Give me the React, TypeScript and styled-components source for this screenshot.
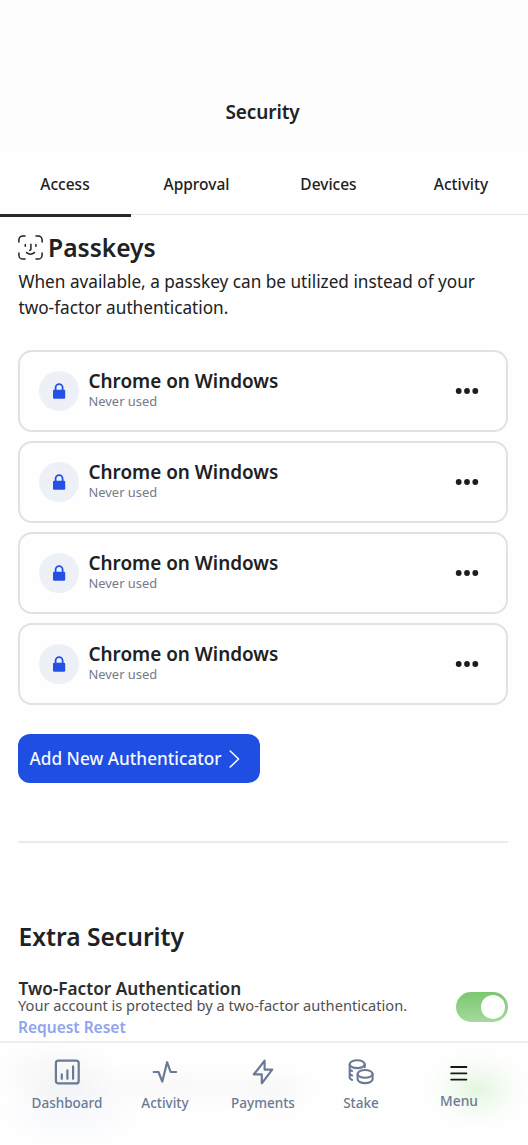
import React from "react";
import styled, { createGlobalStyle } from "styled-components";

const Global = createGlobalStyle`
  *, *::before, *::after { box-sizing: border-box; }
  body { margin: 0; background: #fff; }
  button { font: inherit; letter-spacing: inherit; border: 0; padding: 0; background: none; cursor: pointer; color: inherit; }
  h1, h2, h3, p { margin: 0; }
  svg { display: block; flex: none; }
`;

const Screen = styled.div`
  width: 100%;
  height: 1145px;
  overflow: hidden;
  display: flex;
  flex-direction: column;
  background: #fefefe;
  color: #202122;
  font-family: "Noto Sans", sans-serif;
`;

const Header = styled.header`
  height: 151px;
  flex: none;
  padding: 98px 3px 0 0;
  background: #fdfdfd;
  text-align: center;
`;

const Title = styled.h1`
  font-size: 19px;
  line-height: 28px;
  font-weight: 600;
  letter-spacing: -0.1px;
`;

const Tabs = styled.nav`
  height: 66px;
  flex: none;
  display: grid;
  grid-template-columns: 131px 132px 132px 133px;
  background: linear-gradient(#e6e6e6, #e6e6e6) 0 63px / 100% 1px no-repeat;
`;

const Tab = styled.button<{ $active?: boolean }>`
  height: 66px;
  padding: 2px 1px 0 0;
  border-bottom: 3px solid ${(p) => (p.$active ? "#29292b" : "transparent")};
  font-size: 15.5px;
  font-weight: 500;
`;

const Content = styled.main`
  flex: 1;
  min-height: 0;
  overflow: hidden;
  padding: 13px 20px 0 18px;
`;

const SectionTitle = styled.h2`
  display: flex;
  align-items: center;
  gap: 5px;
  height: 35px;
  font-size: 24.6px;
  font-weight: 600;
`;

const Intro = styled.p`
  margin-top: 4px;
  padding-left: 0.5px;
  font-size: 17.2px;
  line-height: 26px;
  white-space: nowrap;
`;

const KeyList = styled.div`
  margin-top: 29px;
  display: flex;
  flex-direction: column;
  gap: 9px;
`;

const KeyCard = styled.div`
  height: 82px;
  display: flex;
  align-items: center;
  padding: 0 27px 0 19px;
  border: 2px solid #e1e2e2;
  border-radius: 14px;
`;

const KeyBadge = styled.span`
  width: 40px;
  height: 40px;
  display: grid;
  place-items: center;
  border-radius: 50%;
  background: #edf1f7;
`;

const KeyText = styled.div`
  flex: 1;
  margin-left: 9.5px;
  padding-bottom: 3px;
`;

const KeyName = styled.h3`
  font-size: 18.9px;
  line-height: 24px;
  font-weight: 600;
`;

const KeyMeta = styled.p`
  font-size: 12.9px;
  line-height: 17px;
  color: #747b86;
`;

const AddButton = styled.button`
  margin-top: 29px;
  width: 242px;
  height: 49px;
  display: flex;
  align-items: center;
  gap: 7px;
  padding-left: 11.5px;
  border-radius: 12px;
  background: #1f4ee3;
  color: #f4f7ff;
  font-size: 17.2px;
  font-weight: 500;
  white-space: nowrap;
`;

const Divider = styled.hr`
  height: 2px;
  margin: 58px 0 0;
  border: 0;
  background: #ebebeb;
`;

const ExtraTitle = styled.h2`
  margin-top: 77px;
  padding-left: 0.5px;
  font-size: 24.6px;
  line-height: 34px;
  font-weight: 600;
`;

const Setting = styled.div`
  margin-top: 24px;
  display: flex;
  justify-content: space-between;
`;

const SettingName = styled.h3`
  padding: 1px 0 0 0.5px;
  font-size: 17.2px;
  line-height: 20px;
  font-weight: 600;
  color: #2c2c2d;
`;

const SettingMeta = styled.p`
  margin-top: -2px;
  font-size: 14.63px;
  line-height: 16px;
  color: #505152;
  white-space: nowrap;
`;

const ResetLink = styled.button`
  display: block;
  margin-top: 3px;
  font-size: 15.5px;
  line-height: 22px;
  font-weight: 600;
  color: #8fa4ee;
`;

const Toggle = styled.button`
  width: 52px;
  height: 30px;
  margin-top: 14px;
  padding: 3px;
  display: flex;
  justify-content: flex-end;
  border-radius: 15px;
  background: linear-gradient(#7bc770, #a4da9c);
`;

const Knob = styled.span`
  width: 24px;
  height: 24px;
  border-radius: 50%;
  background: #fff;
`;

const BottomNav = styled.nav`
  height: 104px;
  flex: none;
  display: grid;
  grid-template-columns: repeat(5, 98px);
  padding-left: 18px;
  border-top: 2px solid #eeeeee;
  background:
    radial-gradient(ellipse 52px 40px at 477px 46px, rgba(190, 235, 180, 0.42), rgba(190, 235, 180, 0.2) 40%, rgba(190, 235, 180, 0.05) 75%, transparent),
    radial-gradient(ellipse 64px 36px at 58px 34px, rgba(90, 90, 90, 0.05), rgba(90, 90, 90, 0.035) 40%, rgba(90, 90, 90, 0.01) 75%, transparent),
    radial-gradient(ellipse 68px 34px at 70px 68px, rgba(120, 145, 240, 0.05), rgba(120, 145, 240, 0.03) 50%, transparent),
    radial-gradient(ellipse 150px 26px at 175px 44px, rgba(90, 90, 90, 0.03), rgba(90, 90, 90, 0.01) 60%, transparent),
    radial-gradient(ellipse 42px 28px at 274px 48px, rgba(90, 90, 90, 0.03), rgba(90, 90, 90, 0.01) 60%, transparent),
    #fefefe;
`;

const NavItem = styled.button<{ $raised?: boolean }>`
  height: 72px;
  display: flex;
  flex-direction: column;
  align-items: center;
  justify-content: flex-end;
  gap: ${(p) => (p.$raised ? 5 : 8)}px;
  padding-bottom: ${(p) => (p.$raised ? 4 : 2)}px;
  font-size: ${(p) => (p.$raised ? 13.8 : 13.5)}px;
  line-height: 20px;
  font-weight: 500;
  color: #6b7a94;
`;

const line = {
  fill: "none",
  stroke: "currentColor",
  strokeLinecap: "round" as const,
  strokeLinejoin: "round" as const,
};

const FaceIcon = () => (
  <svg width="25" height="26" viewBox="0 0 25 26" {...line} strokeWidth="1.5">
    <path d="M.9 7V4.8A4 4 0 0 1 4.9.9H7M18 .9h2.1a4 4 0 0 1 4 3.9V7M24.1 18v2.2a4 4 0 0 1-4 3.9H18M7 24.1H4.9a4 4 0 0 1-4-3.9V18" />
    <path d="M7.3 9.5v1.7M17.9 9.5v1.7M12.9 9.3v5c0 .7-.4 1-1.2 1M8.6 17.6q3.9 3.2 7.8 0" />
  </svg>
);

const LockIcon = () => (
  <svg width="14" height="16" viewBox="0 0 14 16">
    <rect x="1" y="6.8" width="12.2" height="9" rx="1.2" fill="#2450e5" />
    <path d="M3.6 7.4V4.6a3.5 3.5 0 0 1 7 0v2.8" fill="none" stroke="#2450e5" strokeWidth="1.8" />
  </svg>
);

const DotsIcon = () => (
  <svg width="24" height="8" viewBox="0 0 24 8" fill="#1d1d1f">
    <circle cx="3.7" cy="4" r="2.9" />
    <circle cx="12" cy="4" r="2.9" />
    <circle cx="20.3" cy="4" r="2.9" />
  </svg>
);

const ChevronIcon = () => (
  <svg width="11" height="18" viewBox="0 0 11 18" {...line} strokeWidth="1.6">
    <path d="M1.2 1 9.6 9l-8.4 8" />
  </svg>
);

const DashboardIcon = () => (
  <svg width="26" height="26" viewBox="0 0 26 26" {...line} strokeWidth="2.2">
    <rect x="1.9" y="1.6" width="22.8" height="22.8" rx="2.5" />
    <path d="M7.8 15.4v4.4M13.4 11.4v8.4M19.1 7.4v12.4" />
  </svg>
);

const PulseIcon = () => (
  <svg width="26" height="26" viewBox="0 0 26 26" {...line} strokeWidth="2.2">
    <path d="M1.7 13h4.8l3.8 9.6 4.8-19.4L18.6 13h5.6" />
  </svg>
);

const BoltIcon = () => (
  <svg width="26" height="26" viewBox="0 0 26 26" {...line} strokeWidth="2.2">
    <path d="M14.6 1.7 3.9 15.3h7.9v9L22.2 10.6h-7.6z" />
  </svg>
);

const CoinsIcon = () => (
  <svg width="26" height="26" viewBox="0 0 26 26" {...line} strokeWidth="2.1">
    <ellipse cx="9.2" cy="5.2" rx="7.5" ry="3.9" />
    <path d="M1.7 5.2v13.6c0 .9.8 1.6 2.4 2.1M16.7 5.2v3M1.7 9.8c0 .9.7 1.6 2.4 2.1M1.7 14.3c0 .9.7 1.6 2.4 2.1" />
    <ellipse cx="17.1" cy="14.9" rx="7.5" ry="3.9" />
    <path d="M9.6 14.9v5.3c0 2.2 3.4 3.9 7.5 3.9s7.5-1.7 7.5-3.9v-5.3" />
  </svg>
);

const MenuIcon = () => (
  <svg width="26" height="26" viewBox="0 0 26 26" fill="none" stroke="#18181a" strokeWidth="1.9" strokeLinecap="round">
    <path d="M5.2 7h15.2M5.2 13.4h15.2M5.2 19.6h15.2" />
  </svg>
);

const tabs = ["Access", "Approval", "Devices", "Activity"];
const passkeys = [1, 2, 3, 4].map((id) => ({ id, name: "Chrome on Windows", meta: "Never used" }));
const navItems = [
  { label: "Dashboard", Icon: DashboardIcon },
  { label: "Activity", Icon: PulseIcon },
  { label: "Payments", Icon: BoltIcon },
  { label: "Stake", Icon: CoinsIcon },
  { label: "Menu", Icon: MenuIcon },
];

export default function App() {
  return (
    <Screen>
      <Global />
      <Header>
        <Title>Security</Title>
      </Header>
      <Tabs>
        {tabs.map((t, i) => (
          <Tab key={t} $active={i === 0}>{t}</Tab>
        ))}
      </Tabs>
      <Content>
        <SectionTitle><FaceIcon />Passkeys</SectionTitle>
        <Intro>
          When available, a passkey can be utilized instead of your<br />
          two-factor authentication.
        </Intro>
        <KeyList>
          {passkeys.map((k) => (
            <KeyCard key={k.id}>
              <KeyBadge><LockIcon /></KeyBadge>
              <KeyText>
                <KeyName>{k.name}</KeyName>
                <KeyMeta>{k.meta}</KeyMeta>
              </KeyText>
              <DotsIcon />
            </KeyCard>
          ))}
        </KeyList>
        <AddButton>Add New Authenticator<ChevronIcon /></AddButton>
        <Divider />
        <ExtraTitle>Extra Security</ExtraTitle>
        <Setting>
          <div>
            <SettingName>Two-Factor Authentication</SettingName>
            <SettingMeta>Your account is protected by a two-factor authentication.</SettingMeta>
            <ResetLink>Request Reset</ResetLink>
          </div>
          <Toggle role="switch" aria-checked="true" aria-label="Two-Factor Authentication"><Knob /></Toggle>
        </Setting>
      </Content>
      <BottomNav>
        {navItems.map(({ label, Icon }) => (
          <NavItem key={label} $raised={label === "Menu"}>
            <Icon />
            {label}
          </NavItem>
        ))}
      </BottomNav>
    </Screen>
  );
}
